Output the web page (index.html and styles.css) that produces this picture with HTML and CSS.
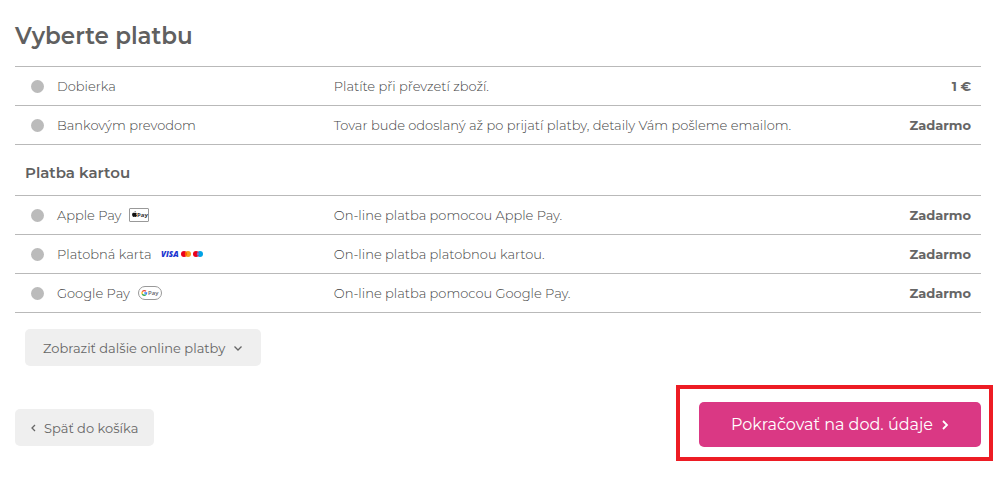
FILE: index.html
```html
<!DOCTYPE html>
<html lang="sk">

<head>
    <meta charset="UTF-8">
    <meta name="viewport" content="width=device-width, initial-scale=1.0">
    <title>Vyberte platbu</title>
    <link rel="stylesheet" href="styles.css">
</head>

<body>
    <form class="checkout">
        <h1 class="title">Vyberte platbu</h1>

        <!-- Payment methods -->
        <table class="payments">
            <tbody>
                <tr>
                    <td class="method">
                        <div class="method-inner">
                            <input type="radio" name="payment" id="pay-cod">
                            <label for="pay-cod">Dobierka</label>
                        </div>
                    </td>
                    <td class="desc">Platíte při převzetí zboží.</td>
                    <td class="price">1 €</td>
                </tr>
                <tr>
                    <td class="method">
                        <div class="method-inner">
                            <input type="radio" name="payment" id="pay-bank">
                            <label for="pay-bank">Bankovým prevodom</label>
                        </div>
                    </td>
                    <td class="desc">Tovar bude odoslaný až po prijatí platby, detaily Vám pošleme emailom.</td>
                    <td class="price">Zadarmo</td>
                </tr>
            </tbody>
            <tbody>
                <tr>
                    <th class="group" colspan="3">Platba kartou</th>
                </tr>
                <tr>
                    <td class="method">
                        <div class="method-inner">
                            <input type="radio" name="payment" id="pay-apple">
                            <label for="pay-apple">Apple Pay</label>
                            <svg class="logo" width="20" height="14" viewBox="0 0 20 14">
                                <rect x="0.5" y="0.5" width="19" height="13" rx="0.5" fill="#fff" stroke="#999" />
                                <path d="M6.200 5c.6-.4 1.300-.2 1.600.3-.7.500-.6 1.500.2 1.900-.3.800-.8 1.800-1.400 1.800-.4 0-.5-.2-.9-.2s-.5.2-.9.200C3.900 9 3.100 7.700 3.100 6.500c0-1.300 1-1.900 1.900-1.600.4.200.8.200 1.200.1zM5.400 4.500c0-.7.500-1.300 1.200-1.400.1.700-.5 1.400-1.200 1.400z" fill="#111" />
                                <text x="8" y="9" class="logo-apple">Pay</text>
                            </svg>
                        </div>
                    </td>
                    <td class="desc">On-line platba pomocou Apple Pay.</td>
                    <td class="price">Zadarmo</td>
                </tr>
                <tr>
                    <td class="method">
                        <div class="method-inner">
                            <input type="radio" name="payment" id="pay-card">
                            <label for="pay-card">Platobná karta</label>
                            <svg class="logo" width="44" height="14" viewBox="0 0 44 14">
                                <text x="1" y="10" class="logo-visa">VISA</text>
                                <circle cx="24" cy="7" r="3" fill="#eb001b" />
                                <circle cx="28" cy="7" r="3" fill="#f79e1b" />
                                <path d="M26 4.800a3 3 0 0 1 0 4.400a3 3 0 0 1 0-4.400z" fill="#ff5f00" />
                                <circle cx="40" cy="7" r="3" fill="#00a2e5" />
                                <circle cx="36" cy="7" r="3" fill="#eb001b" />
                                <path d="M38 4.800a3 3 0 0 1 0 4.400a3 3 0 0 1 0-4.400z" fill="#7375cf" />
                            </svg>
                        </div>
                    </td>
                    <td class="desc">On-line platba platobnou kartou.</td>
                    <td class="price">Zadarmo</td>
                </tr>
                <tr>
                    <td class="method">
                        <div class="method-inner">
                            <input type="radio" name="payment" id="pay-google">
                            <label for="pay-google">Google Pay</label>
                            <svg class="logo" width="24" height="14" viewBox="0 0 24 14">
                                <rect x="0.5" y="0.5" width="23" height="13" rx="6.5" fill="#fff" stroke="#999" />
                                <g fill="none" stroke-width="1.300">
                                    <path d="M8 5.300A2.300 2.300 0 0 0 4.300 5.800" stroke="#ea4335" />
                                    <path d="M4.300 5.800A2.300 2.300 0 0 0 4.300 8.100" stroke="#fbbc04" />
                                    <path d="M4.300 8.100A2.300 2.300 0 0 0 7.900 8.600" stroke="#34a853" />
                                    <path d="M7.900 8.600A2.300 2.300 0 0 0 8.600 7H6.300" stroke="#4285f4" />
                                </g>
                                <text x="10" y="9" class="logo-google">Pay</text>
                            </svg>
                        </div>
                    </td>
                    <td class="desc">On-line platba pomocou Google Pay.</td>
                    <td class="price">Zadarmo</td>
                </tr>
            </tbody>
        </table>

        <button type="button" class="btn btn-more">
            Zobraziť dalšie online platby
            <svg width="10" height="8" viewBox="0 0 10 8"><path d="M1.500 2.500L5 6l3.500-3.500" /></svg>
        </button>

        <!-- Navigation -->
        <div class="actions">
            <a href="#" class="btn btn-back">
                <svg width="5" height="8" viewBox="0 0 5 8"><path d="M4 1L1 4l3 3" /></svg>
                Späť do košíka
            </a>
            <div class="next">
                <button type="submit" class="btn btn-next">
                    Pokračovať na dod. údaje
                    <svg width="8" height="10" viewBox="0 0 8 10"><path d="M2 1l4 4-4 4" /></svg>
                </button>
            </div>
        </div>
    </form>
</body>

</html>
```
FILE: styles.css
```css
* {
    box-sizing: border-box;
}

body {
    margin: 0;
    background-color: #fff;
    color: #444;
    font-family: Montserrat, Inter, sans-serif;
    font-size: 13px;
    font-weight: 300;
    line-height: 18px;
}

.checkout {
    padding: 20px 19px 36px 15px;
}

.title {
    margin: 0 0 14px;
    font-size: 23px;
    line-height: 32px;
    font-weight: 600;
    color: #606060;
}

/* Payment methods */
.payments {
    width: 100%;
    border-collapse: collapse;
    border-bottom: 1px solid #b9b9b9;
}

.payments tr {
    border-top: 1px solid #b9b9b9;
}

.payments td {
    height: 39px;
    padding: 0;
}

.payments .group {
    height: 51px;
    padding: 6px 10px 0;
    font-size: 15px;
    font-weight: 600;
    text-align: left;
    color: #606060;
}

.payments .method {
    width: 33%;
    padding-left: 16px;
}

.method-inner {
    display: flex;
    align-items: center;
}

.method-inner input {
    appearance: none;
    width: 13px;
    height: 13px;
    margin: 0 13px 0 0;
    border-radius: 50%;
    background-color: #bbb;
    cursor: pointer;
}

.method-inner input:checked {
    background-color: #da3884;
}

.method-inner label {
    cursor: pointer;
}

.payments .price {
    padding-right: 10px;
    font-weight: 700;
    text-align: right;
    white-space: nowrap;
    color: #666;
}

/* Card logos */
.logo {
    margin-left: 8px;
}

.logo-apple,
.logo-google {
    font-family: "Open Sans", sans-serif;
    font-size: 6px;
    font-weight: 700;
    fill: #333;
}

.logo-google {
    font-weight: 600;
    fill: #5f6368;
}

.logo-visa {
    font-family: "Open Sans", sans-serif;
    font-size: 8px;
    font-weight: 800;
    font-style: italic;
    fill: #1a34d0;
}

/* Buttons */
.btn {
    display: inline-flex;
    align-items: center;
    gap: 8px;
    border: none;
    border-radius: 5px;
    background-color: #efefef;
    color: #666;
    font-family: inherit;
    font-size: 13px;
    font-weight: 400;
    text-decoration: none;
    white-space: nowrap;
    cursor: pointer;
}

.btn svg {
    fill: none;
    stroke: currentColor;
    stroke-width: 1.3;
}

.btn-more {
    height: 37px;
    margin: 16px 10px 0;
    padding: 0 18px;
}

.actions {
    display: flex;
    justify-content: space-between;
    align-items: center;
    margin-top: 36px;
}

.btn-back {
    height: 37px;
    margin-top: 6px;
    padding: 0 16px;
}

.btn-next {
    height: 45px;
    padding: 0 32px;
    background-color: #da3884;
    color: #fff;
    font-size: 16px;
}

.btn-next svg {
    stroke-width: 1.8;
}

/* Red frame around the next step */
.next {
    position: relative;
}

.next::before {
    content: "";
    position: absolute;
    inset: -17px -12px -14px -23px;
    border: 4px solid #ed1c24;
    pointer-events: none;
}
```
